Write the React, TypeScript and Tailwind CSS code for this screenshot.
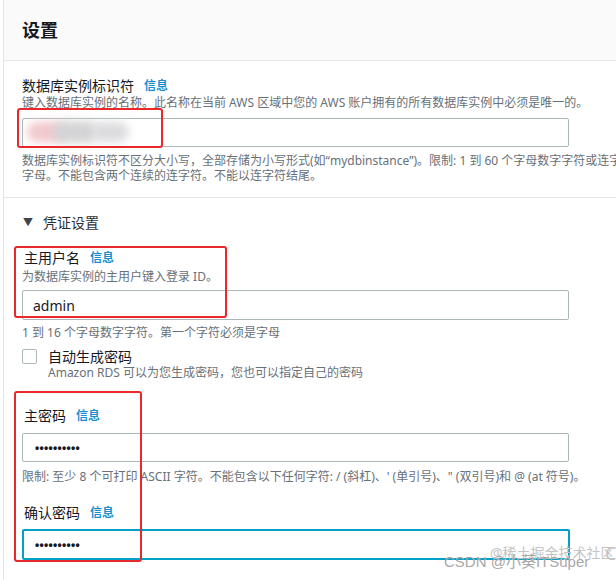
import React from "react";

const font = { fontFamily: '"Noto Sans", "Noto Sans CJK SC", sans-serif' };

function Info() {
  return <span className="ml-[10px] text-[12px] font-bold text-[#1a8fd0] leading-[20px]">信息</span>;
}

function Label({ text }: { text: string }) {
  return (
    <div className="flex h-[20px] items-center">
      <span className="text-[14px] leading-[20px] text-[#16191f]">{text}</span>
      <Info />
    </div>
  );
}

function Dots() {
  return (
    <span className="text-[12px] font-bold tracking-[0.3px] text-[#16191f]" style={{ fontFamily: '"Liberation Sans", sans-serif' }}>
      ••••••••••
    </span>
  );
}

export default function App() {
  return (
    <div className="relative h-[580px] w-[616px] overflow-hidden bg-white" style={font}>
      <div className="ml-[3px] h-full border-l border-[#e3e6e6]">
        {/* header */}
        <div className="flex h-[61px] items-center border-b border-[#e6e9e9] bg-[#fafafa] pl-[18px]">
          <span className="text-[18px] font-bold text-[#16191f]">设置</span>
        </div>

        {/* section 1 */}
        <div className="border-b border-[#e6e9e9] pb-[14px] pl-[18px] pt-[15px]">
          <Label text="数据库实例标识符" />
          <div className="mt-[-1px] whitespace-nowrap text-[12px] leading-[16px] text-[#687078]">
            键入数据库实例的名称。此名称在当前 AWS 区域中您的 AWS 账户拥有的所有数据库实例中必须是唯一的。
          </div>
          <div className="relative mt-[7px] h-[29px] w-[547px] rounded-[2px] border border-[#aab7b8] bg-white">
            <div className="absolute left-[4px] top-[3px] h-[20px] w-[40px] rounded-full bg-[#f1c9cc] blur-[4px]" />
            <div className="absolute left-[30px] top-[2px] h-[22px] w-[45px] rounded-full bg-[#d4d4d6] blur-[4px]" />
            <div className="absolute left-[68px] top-[3px] h-[20px] w-[38px] rounded-full bg-[#dcdcdf] blur-[4px]" />
          </div>
          <div className="mt-[6px] whitespace-nowrap text-[12px] leading-[15px] text-[#687078]">
            <div>数据库实例标识符不区分大小写，全部存储为小写形式(如“mydbinstance”)。限制: 1 到 60 个字母数字字符或连字符。第一个字符必须是</div>
            <div>字母。不能包含两个连续的连字符。不能以连字符结尾。</div>
          </div>
        </div>

        {/* section 2 */}
        <div className="pl-[18px] pt-[14px]">
          <div className="flex h-[20px] items-center">
            <span className="pl-[1px] text-[10px] text-[#3f454c]">▼</span>
            <span className="ml-[10px] text-[14px] text-[#2a2f35]">凭证设置</span>
          </div>

          <div className="mt-[16px] pl-[2px]">
            <Label text="主用户名" />
          </div>
          <div className="mt-[1px] text-[12px] leading-[16px] text-[#687078]">为数据库实例的主用户键入登录 ID。</div>
          <div className="mt-[5px] flex h-[30px] w-[547px] items-center rounded-[2px] border border-[#aab7b8] pl-[10px] text-[14px] text-[#16191f]">
            admin
          </div>
          <div className="mt-[5px] text-[12px] leading-[16px] text-[#687078]">1 到 16 个字母数字字符。第一个字符必须是字母</div>

          <div className="mt-[5px] flex h-[20px] items-center">
            <div className="h-[15px] w-[15px] rounded-[2px] border border-[#aab7b8] bg-white" />
            <span className="ml-[11px] text-[14px] text-[#16191f]">自动生成密码</span>
          </div>
          <div className="pl-[26px] text-[12px] leading-[14px] text-[#687078]">Amazon RDS 可以为您生成密码，您也可以指定自己的密码</div>

          <div className="mt-[26px] pl-[2px]">
            <Label text="主密码" />
          </div>
          <div className="mt-[7px] flex h-[29px] w-[547px] items-center rounded-[2px] border border-[#aab7b8] pl-[12px]">
            <Dots />
          </div>
          <div className="mt-[7px] whitespace-nowrap text-[12px] leading-[16px] text-[#687078]">
            限制: 至少 8 个可打印 ASCII 字符。不能包含以下任何字符: / (斜杠)、' (单引号)、" (双引号)和 @ (at 符号)。
          </div>

          <div className="mt-[18px] pl-[2px]">
            <Label text="确认密码" />
          </div>
          <div className="mt-[6px] flex h-[31px] w-[548px] items-center rounded-[2px] border-2 border-[#00a1c9] pl-[11px]">
            <Dots />
          </div>
        </div>
      </div>

      {/* annotation boxes */}
      <div className="absolute left-[17px] top-[108px] h-[40px] w-[146px] rounded-[3px] border-2 border-[#e8282b]" />
      <div className="absolute left-[14px] top-[246px] h-[72px] w-[213px] rounded-[3px] border-2 border-[#e8282b]" />
      <div className="absolute left-[14px] top-[391px] h-[171px] w-[128px] rounded-[3px] border-2 border-[#e8282b]" />

      {/* watermarks */}
      <div className="absolute left-[490px] top-[542px] whitespace-nowrap text-[14px] text-[#c4c4c4]">@稀土掘金技术社区</div>
      <div className="absolute left-[605px] top-[540px] text-[18px] text-[#c4c4c4]">C</div>
      <div className="absolute left-[444px] top-[551px] whitespace-nowrap text-[15px] text-[#a8a8a8]" style={{ fontFamily: '"Liberation Sans", "Noto Sans CJK SC", sans-serif' }}>
        CSDN @小葵ITSuper
      </div>
    </div>
  );
}
